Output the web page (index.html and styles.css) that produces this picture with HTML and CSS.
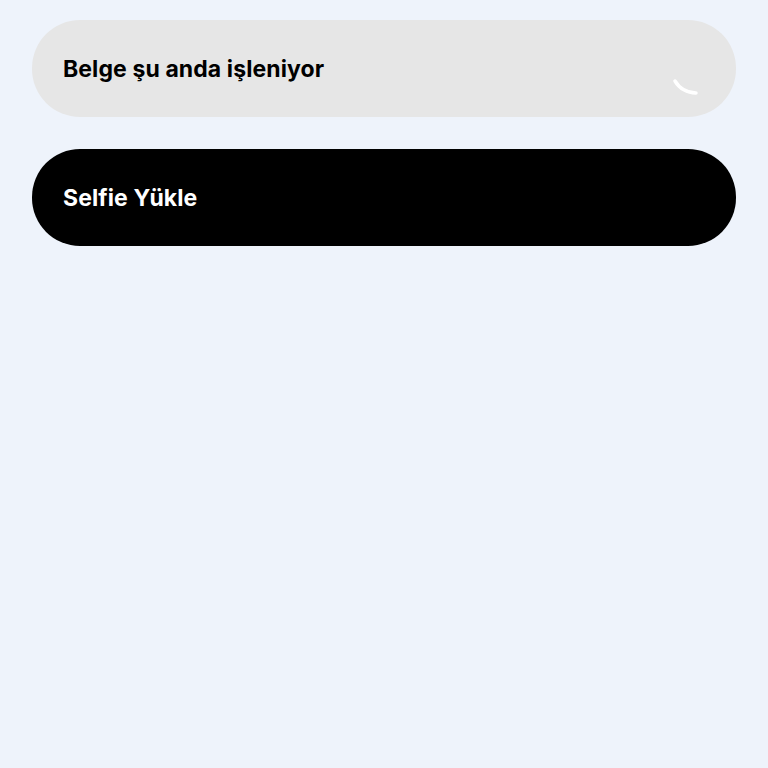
FILE: index.html
```html
<!DOCTYPE html>
<html>
<head>
    <title>Belge</title>
    <link rel="stylesheet" href="styles.css">
</head>
<body>

<div class="actions">
    <div class="btn btn-busy">
        <span class="label">Belge şu anda işleniyor</span>
        <svg class="spinner" width="56" height="56" viewBox="0 0 56 56">
            <!-- only the visible arc of the spinner -->
            <path d="M9 40 A24 24 0 0 0 30 51.9" fill="none" stroke="#ffffff" stroke-width="3.5" stroke-linecap="round"/>
        </svg>
    </div>
    <div class="btn btn-dark">
        <span class="label">Selfie Yükle</span>
    </div>
</div>

</body>
</html>
```

FILE: styles.css
```css
body {
    margin: 0;
    background-color: #eef3fb;
    font-family: 'Inter', 'Liberation Sans', sans-serif;
}
.actions {
    display: flex;
    flex-direction: column;
    gap: 32px;
    padding: 20px 32px;
}
.btn {
    height: 97px;
    border-radius: 48px;
    display: flex;
    align-items: center;
    justify-content: space-between;
    padding-left: 31px;
    padding-right: 14px;
    box-sizing: border-box;
}
.label {
    font-size: 23px;
    font-weight: 700;
    letter-spacing: 0.1px;
}
.btn-busy {
    background-color: #e6e6e6;
    color: #000000;
}
.btn-dark {
    background-color: #000000;
    color: #ffffff;
}
.spinner {
    display: block;
}
```
